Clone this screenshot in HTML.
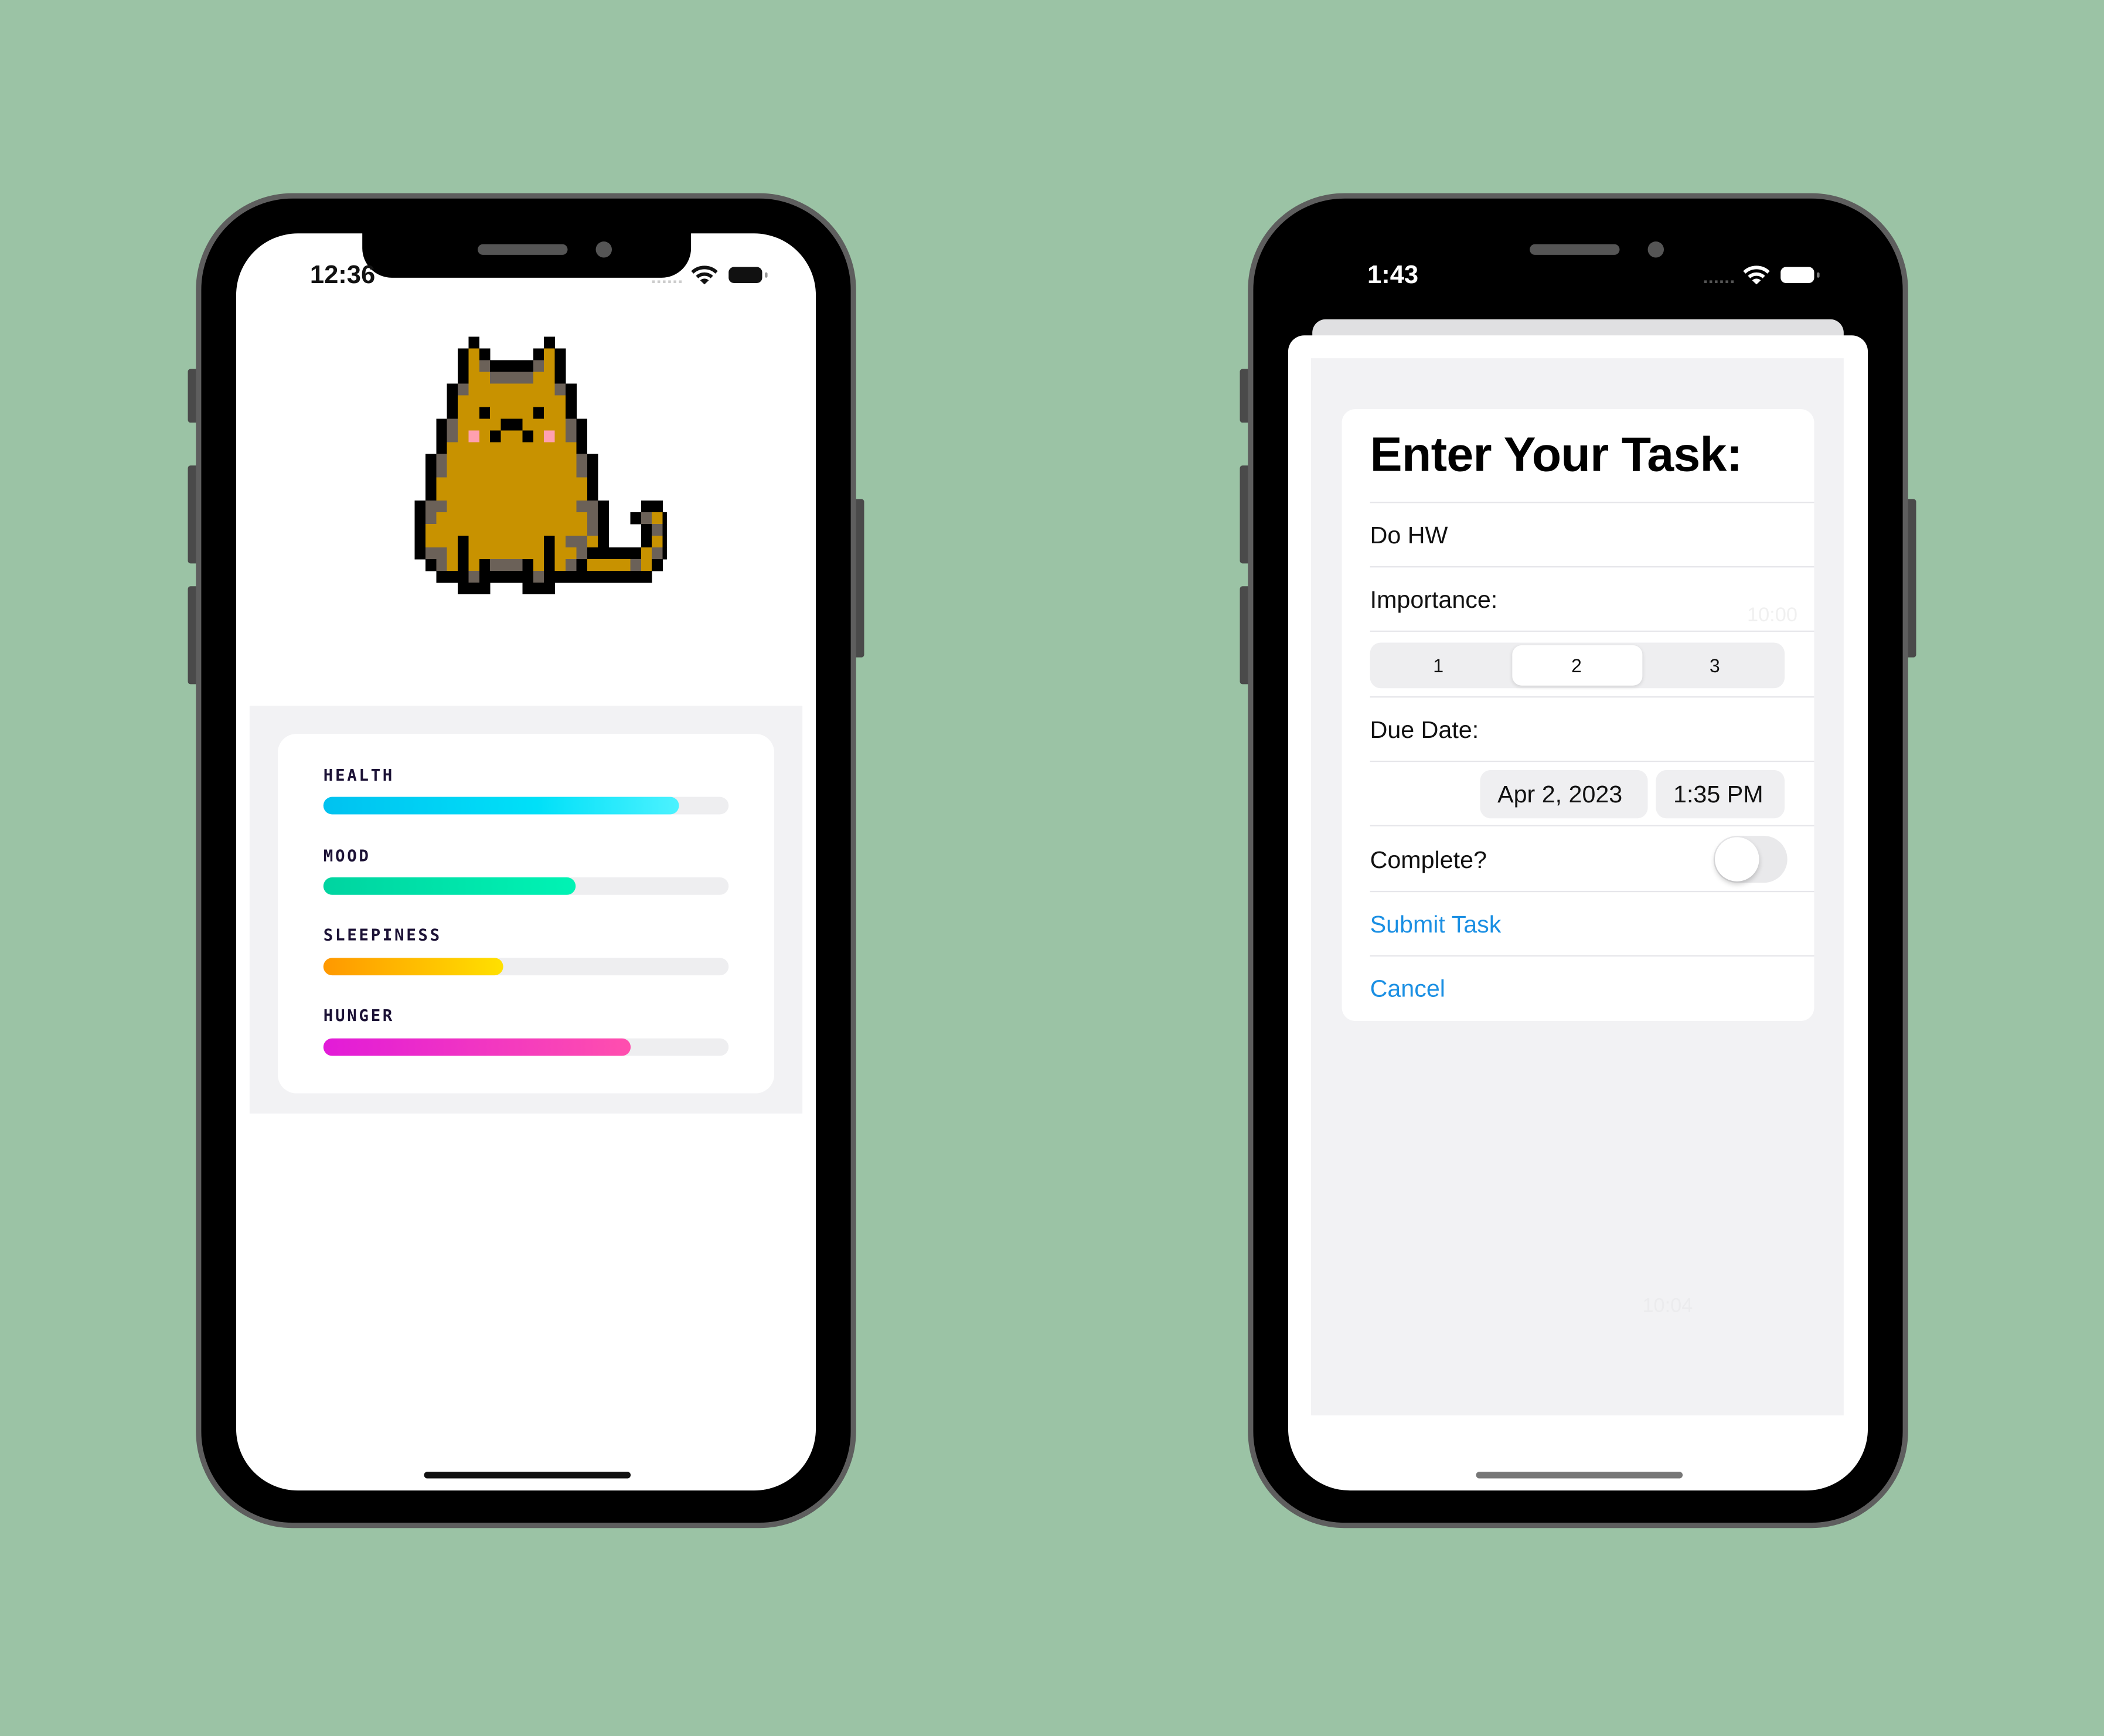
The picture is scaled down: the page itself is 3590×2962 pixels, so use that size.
<!DOCTYPE html>
<html><head><meta charset="utf-8">
<style>
html,body{margin:0;padding:0;}
body{width:3590px;height:2962px;overflow:hidden;background:#9bc3a5;position:relative;font-family:"Liberation Sans",sans-serif;}
#s{position:absolute;left:0;top:0;width:1568px;height:1294px;transform:scale(2.28954,2.28903);transform-origin:0 0;}
.a{position:absolute;}
.frame{border-radius:72px;background:#000;border:4px solid #5e5e5e;box-sizing:border-box;}
.btn{background:#4a4a4a;border-radius:2px;}
.screen{border-radius:46px;overflow:hidden;}
.notch{background:#000;border-radius:0 0 22px 22px;}
.spk{background:#555;border-radius:4px;}
.cam{background:#555;border-radius:50%;}
.lbl{font-family:"DejaVu Sans Mono","Liberation Mono",monospace;font-weight:bold;font-size:12px;color:#1c1236;letter-spacing:1.6px;}
.track{background:#eeeef0;border-radius:7px;height:13px;width:302px;}
.fill{height:13px;border-radius:7px;}
.sep{background:#e6e6ea;height:1px;left:1021px;width:331px;}
.t{font-size:18px;color:#111;}
.blue{color:#1a8fe3;}
</style></head><body>
<div id="s">
<!-- LEFT PHONE -->
<div class="a btn" style="left:140px;top:275px;width:8px;height:40px"></div>
<div class="a btn" style="left:140px;top:347px;width:8px;height:73px"></div>
<div class="a btn" style="left:140px;top:437px;width:8px;height:73px"></div>
<div class="a btn" style="left:636px;top:372px;width:8px;height:118px"></div>
<div class="a frame" style="left:146px;top:144px;width:492px;height:995px"></div>
<div class="a screen" style="left:176px;top:174px;width:432px;height:937px;background:#fff">
  <div class="a" style="left:10px;top:352px;width:412px;height:304px;background:#f2f2f4"></div>
  <div class="a" style="left:31px;top:373px;width:370px;height:268px;background:#fff;border-radius:14px"></div>
</div>
<div class="a notch" style="left:270px;top:170px;width:245px;height:37px"></div>
<div class="a spk" style="left:356px;top:182px;width:67px;height:8px"></div>
<div class="a cam" style="left:444px;top:180px;width:12px;height:12px"></div>
<div class="a" style="left:231px;top:195px;font-size:19px;font-weight:bold;color:#111">12:36</div>
<svg class="a" style="left:514px;top:197px" width="22" height="16" viewBox="0 0 22 16"><path d="M2 6 A13 13 0 0 1 20 6" stroke="#111" stroke-width="2.6" fill="none"/><path d="M5.5 9.5 A8 8 0 0 1 16.5 9.5" stroke="#111" stroke-width="2.6" fill="none"/><path d="M11 15 L7.8 12 A4.5 4.5 0 0 1 14.2 12 Z" fill="#111"/></svg>
<div class="a" style="left:543px;top:199px;width:25px;height:12px;background:#111;border-radius:4px"></div>
<div class="a" style="left:570px;top:203px;width:2px;height:4px;background:#999;border-radius:1px"></div>
<div class="a" style="left:486px;top:209px;width:22px;height:2px;border-top:2px dotted #ccc"></div>
<svg id="cat" class="a" style="left:308.6px;top:251.2px" width="188" height="192" viewBox="0 0 23.4 22" preserveAspectRatio="none" shape-rendering="crispEdges"></svg>
<div class="a lbl" style="left:241px;top:571px">HEALTH</div>
<div class="a track" style="left:241px;top:594px"><div class="fill" style="width:265px;background:linear-gradient(90deg,#00c2f0,#00e0f8 60%,#4cf2ff)"></div></div>
<div class="a lbl" style="left:241px;top:631px">MOOD</div>
<div class="a track" style="left:241px;top:654px"><div class="fill" style="width:188px;background:linear-gradient(90deg,#00d4a0,#00f3b4)"></div></div>
<div class="a lbl" style="left:241px;top:690px">SLEEPINESS</div>
<div class="a track" style="left:241px;top:714px"><div class="fill" style="width:134px;background:linear-gradient(90deg,#ff9800,#ffe000)"></div></div>
<div class="a lbl" style="left:241px;top:750px">HUNGER</div>
<div class="a track" style="left:241px;top:774px"><div class="fill" style="width:229px;background:linear-gradient(90deg,#e21bd8,#ff4fae)"></div></div>
<div class="a" style="left:316px;top:1097px;width:154px;height:5px;background:#111;border-radius:3px"></div>

<!-- RIGHT PHONE -->
<div class="a btn" style="left:924px;top:275px;width:8px;height:40px"></div>
<div class="a btn" style="left:924px;top:347px;width:8px;height:73px"></div>
<div class="a btn" style="left:924px;top:437px;width:8px;height:73px"></div>
<div class="a btn" style="left:1420px;top:372px;width:8px;height:118px"></div>
<div class="a frame" style="left:930px;top:144px;width:492px;height:995px"></div>
<div class="a screen" style="left:960px;top:174px;width:432px;height:937px;background:#000">
  <div class="a" style="left:18px;top:64px;width:396px;height:30px;background:#e0e0e2;border-radius:10px"></div>
  <div class="a" style="left:0;top:76px;width:432px;height:900px;background:#fff;border-radius:12px"></div>
  <div class="a" style="left:17px;top:93px;width:397px;height:788px;background:#f2f2f4"></div>
</div>
<div class="a notch" style="left:1054px;top:170px;width:245px;height:37px"></div>
<div class="a spk" style="left:1140px;top:182px;width:67px;height:8px"></div>
<div class="a cam" style="left:1228px;top:180px;width:12px;height:12px"></div>
<div class="a" style="left:1019px;top:195px;font-size:19px;font-weight:bold;color:#fff">1:43</div>
<svg class="a" style="left:1298px;top:197px" width="22" height="16" viewBox="0 0 22 16"><path d="M2 6 A13 13 0 0 1 20 6" stroke="#fff" stroke-width="2.6" fill="none"/><path d="M5.5 9.5 A8 8 0 0 1 16.5 9.5" stroke="#fff" stroke-width="2.6" fill="none"/><path d="M11 15 L7.8 12 A4.5 4.5 0 0 1 14.2 12 Z" fill="#fff"/></svg>
<div class="a" style="left:1327px;top:199px;width:25px;height:12px;background:#fff;border-radius:4px"></div>
<div class="a" style="left:1354px;top:203px;width:2px;height:4px;background:#777;border-radius:1px"></div>
<div class="a" style="left:1270px;top:209px;width:22px;height:2px;border-top:2px dotted #555"></div>

<div class="a" style="left:1000px;top:305px;width:352px;height:456px;background:#fff;border-radius:10px"></div>
<div class="a" style="left:1021px;top:318px;font-size:36px;font-weight:bold;color:#000;letter-spacing:-0.3px">Enter Your Task:</div>
<div class="a sep" style="top:374px"></div>
<div class="a t" style="left:1021px;top:389px">Do HW</div>
<div class="a sep" style="top:422px"></div>
<div class="a t" style="left:1021px;top:437px">Importance:</div>
<div class="a" style="left:1302px;top:450px;font-size:15px;color:#f0f0f0">10:00</div>
<div class="a sep" style="top:470px"></div>
<div class="a" style="left:1021px;top:479px;width:309px;height:34px;background:#eeeef0;border-radius:8px"></div>
<div class="a" style="left:1127px;top:481px;width:97px;height:30px;background:#fff;border-radius:7px;box-shadow:0 1px 3px rgba(0,0,0,.12)"></div>
<div class="a" style="left:1068px;top:488px;font-size:14px;color:#111">1</div>
<div class="a" style="left:1171px;top:488px;font-size:14px;color:#111">2</div>
<div class="a" style="left:1274px;top:488px;font-size:14px;color:#111">3</div>
<div class="a sep" style="top:519px"></div>
<div class="a t" style="left:1021px;top:534px">Due Date:</div>
<div class="a sep" style="top:567px"></div>
<div class="a" style="left:1103px;top:574px;width:125px;height:36px;background:#efeff1;border-radius:8px"></div>
<div class="a" style="left:1234px;top:574px;width:96px;height:36px;background:#efeff1;border-radius:8px"></div>
<div class="a t" style="left:1116px;top:582px">Apr 2, 2023</div>
<div class="a t" style="left:1247px;top:582px">1:35 PM</div>
<div class="a sep" style="top:615px"></div>
<div class="a t" style="left:1021px;top:631px">Complete?</div>
<div class="a" style="left:1277px;top:623px;width:55px;height:35px;background:#e9e9eb;border-radius:18px"></div>
<div class="a" style="left:1278px;top:624px;width:33px;height:33px;background:#fff;border-radius:50%;box-shadow:0 2px 4px rgba(0,0,0,.2)"></div>
<div class="a sep" style="top:664px"></div>
<div class="a t blue" style="left:1021px;top:679px">Submit Task</div>
<div class="a sep" style="top:712px"></div>
<div class="a t blue" style="left:1021px;top:727px">Cancel</div>
<div class="a" style="left:1224px;top:965px;font-size:15px;color:#ebebed">10:04</div>
<div class="a" style="left:1100px;top:1097px;width:154px;height:5px;background:#777;border-radius:3px"></div>
</div>
<script>
var rows=[
".....K......K...........",
"....KOK....KOK..........",
"....KOGKKKKGOK..........",
"....KOOGGGGOOK..........",
"...KGOOOOOOOOGK.........",
"...KOOOOOOOOOOK.........",
"...KOOKOOOOKOOK.........",
"..KGOOOOKKOOOOGK........",
"..KGOPOKOOKOPOGK........",
"..KOOOOOOOOOOOOK........",
".KGOOOOOOOOOOOOGK.......",
".KGOOOOOOOOOOOOGK.......",
".KOOOOOOOOOOOOOOK.......",
".KOOOOOOOOOOOOOOK.......",
"KGGOOOOOOOOOOOOGGK...KK.",
"KGOOOOOOOOOOOOOOGK..KGOK",
"KOOOOOOOOOOOOOOOGK...KGK",
"KOOOKOOOOOOOKOGGOK...KOK",
"KGGOKOOOOOOOKOOGKKKKKOGK",
".KGOKOKGGGKOKOGKOOOOGOK.",
"..KKKGKKKKKGKKKKKKKKKK..",
"....KKK...KKK..........."];
var col={K:"#000",G:"#6b6158",O:"#c89200",P:"#ffa0b0"};
var s="";
rows.forEach(function(r,y){for(var x=0;x<r.length;x++){var c=r[x];if(col[c])s+='<rect x="'+x+'" y="'+y+'" width="1.02" height="1.02" fill="'+col[c]+'"/>';}});
document.getElementById("cat").innerHTML=s;
</script>
</body></html>
